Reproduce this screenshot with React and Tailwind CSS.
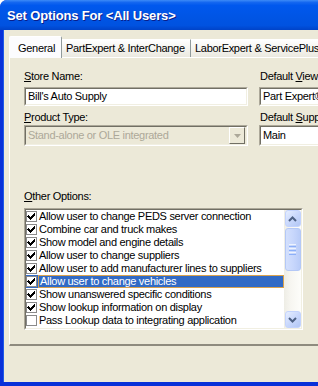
import React from "react";

const items = [
  ["Allow user to change PEDS server connection", true],
  ["Combine car and truck makes", true],
  ["Show model and engine details", true],
  ["Allow user to change suppliers", true],
  ["Allow user to add manufacturer lines to suppliers", true],
  ["Allow user to change vehicles", true],
  ["Show unanswered specific conditions", true],
  ["Show lookup information on display", true],
  ["Pass Lookup data to integrating application", false],
];

function Sunken({ className = "", inner = "", children }) {
  return (
    <div className={"border border-t-[#ACA899] border-l-[#ACA899] border-b-white border-r-white " + className}>
      <div className={"border border-t-[#716F64] border-l-[#716F64] border-b-[#F1EFE2] border-r-[#F1EFE2] h-full " + inner}>
        {children}
      </div>
    </div>
  );
}

function Check({ checked }) {
  return (
    <div className="w-[11px] h-[11px] shrink-0 bg-white border border-[#8A8A8A] flex items-center justify-center">
      {checked && (
        <svg width="9" height="9" viewBox="0 0 9 9" shapeRendering="crispEdges">
          <path d="M1 3h1v1h1v1h1v-1h1v-1h1v-1h1v-1h1v3h-1v1h-1v1h-1v1h-1v1h-1v-1h-1v-1h-1v-1h-1z" fill="#000" />
        </svg>
      )}
    </div>
  );
}

function ScrollBtn({ up }) {
  return (
    <div className="w-[16px] h-[17px] rounded-[3px] border border-[#C3D3FD] bg-[linear-gradient(135deg,#E6EEFF_0%,#C9D8FC_50%,#B2C7F5_100%)] flex items-center justify-center">
      <svg width="9" height="6" viewBox="0 0 9 6">
        <path d={up ? "M1 5L4.5 1.5L8 5" : "M1 1L4.5 4.5L8 1"} fill="none" stroke="#4D6185" strokeWidth="2" />
      </svg>
    </div>
  );
}

export default function App() {
  return (
    <div className="w-[318px] h-[386px] overflow-hidden bg-white font-['Liberation_Sans',Arial,sans-serif] text-[11px] leading-[13px] tracking-[-0.3px] text-black">
      <div className="w-[360px] h-[386px] flex flex-col rounded-tl-[7px] overflow-hidden bg-[#0831D9]">
        {/* Title bar */}
        <div className="h-[30px] shrink-0 flex items-center pl-[7px] pt-[1px] bg-[linear-gradient(180deg,#3D8BF7_0%,#1467F0_8%,#0058EE_18%,#0055E5_55%,#0052E0_85%,#0043C8_100%)]">
          <span className="text-white font-bold text-[13px] leading-[16px] tracking-[-0.15px] [text-shadow:1px_1px_0_#0A1E8A]">
            Set Options For &lt;All Users&gt;
          </span>
        </div>
        {/* Client */}
        <div className="flex-1 ml-[3px] mb-[4px] border-l border-l-[#1F5AE8] bg-[#ECE9D8] flex flex-col pl-[5px] pt-[6px]">
          {/* Tabs */}
          <div className="flex items-end h-[21px] shrink-0 relative z-10">
            <div className="w-[53px] h-[22px] -mb-[1px] bg-[#FCFCFE] border-l border-t border-white border-r border-r-[#919B9C] rounded-t-[2px] pl-[8px] pt-[5px]">
              General
            </div>
            <div className="w-[129px] h-[18px] bg-[linear-gradient(180deg,#FFFFFF_0%,#F3F2EC_60%,#EBE9E0_100%)] border-t border-t-[#FFFFFF] border-r border-r-[#919B9C] pl-[4px] pt-[2px]">
              PartExpert &amp; InterChange
            </div>
            <div className="w-[140px] h-[18px] bg-[linear-gradient(180deg,#FFFFFF_0%,#F3F2EC_60%,#EBE9E0_100%)] border-t border-t-[#FFFFFF] border-r border-r-[#919B9C] pl-[4px] pt-[2px] whitespace-nowrap">
              LaborExpert &amp; ServicePlus
            </div>
          </div>
          {/* Pane */}
          <div className="h-[289px] shrink-0 border-t border-l border-white border-b-2 border-b-[#8E8B7E] flex flex-col pl-[14px] pt-[12px]">
            <div className="grid grid-cols-[224px_120px] gap-x-[11px]">
              <div className="flex flex-col">
                <div className="h-[13px]"><span className="underline">S</span>tore Name:</div>
                <Sunken className="mt-[4px] h-[19px]" inner="bg-white pl-[2px] pt-[1px]">Bill's Auto Supply</Sunken>
                <div className="h-[13px] mt-[5px]"><span className="underline">P</span>roduct Type:</div>
                <Sunken className="mt-[1px] h-[21px]" inner="bg-[#ECE9D8] flex items-center justify-between pl-[2px] pr-[1px]">
                  <span className="text-[#ACA899]">Stand-alone or OLE integrated</span>
                  <div className="w-[16px] h-[17px] border border-t-white border-l-white border-b-[#716F64] border-r-[#716F64] bg-[#ECE9D8] flex items-center justify-center">
                    <svg width="7" height="4" viewBox="0 0 7 4"><path d="M0 0h7L3.5 4z" fill="#ACA899" /></svg>
                  </div>
                </Sunken>
              </div>
              <div className="flex flex-col">
                <div className="h-[13px] pl-[1px] whitespace-nowrap">Default <span className="underline">V</span>iew:</div>
                <Sunken className="mt-[4px] h-[19px]" inner="bg-white pl-[2px] pt-[1px] whitespace-nowrap">Part Expert®</Sunken>
                <div className="h-[13px] mt-[5px] pl-[1px] whitespace-nowrap">Default <span className="underline">S</span>upplier:</div>
                <Sunken className="mt-[1px] h-[21px]" inner="bg-white pl-[2px] flex items-center">Main</Sunken>
              </div>
            </div>
            <div className="h-[13px] mt-[44px]"><span className="underline">O</span>ther Options:</div>
            <Sunken className="mt-[5px] w-[279px] h-[122px]" inner="bg-white flex">
              <div className="flex-1 flex flex-col">
                {items.map(([label, checked], i) => {
                  const sel = i === 5;
                  return (
                    <div key={i} className={"h-[13px] flex items-center whitespace-nowrap " + (sel ? "bg-[#316AC5]" : "")}>
                      <Check checked={checked} />
                      <div className={"ml-[1px] pl-[1px] flex-1 h-[13px] " + (sel ? "text-white border border-[#D9A24E] leading-[11px]" : "")}>{label}</div>
                    </div>
                  );
                })}
              </div>
              <div className="w-[17px] shrink-0 flex flex-col items-center bg-[linear-gradient(90deg,#EEEDE5_0%,#F7F6F1_40%,#FDFDFA_100%)]">
                <ScrollBtn up />
                <div className="mt-[1px] w-[16px] h-[43px] rounded-[3px] border border-[#B4C8F6] bg-[linear-gradient(90deg,#D3E0FD_0%,#C8D7FC_50%,#B9CCF8_100%)] flex flex-col items-center justify-center gap-[1px]">
                  <div className="w-[7px] h-[1px] bg-[#EEF4FE]" />
                  <div className="w-[7px] h-[1px] bg-[#8CB0F8]" />
                  <div className="w-[7px] h-[1px] bg-[#EEF4FE]" />
                  <div className="w-[7px] h-[1px] bg-[#8CB0F8]" />
                  <div className="w-[7px] h-[1px] bg-[#EEF4FE]" />
                  <div className="w-[7px] h-[1px] bg-[#8CB0F8]" />
                </div>
                <div className="flex-1" />
                <ScrollBtn />
              </div>
            </Sunken>
          </div>
          <div className="flex-1" />
        </div>
      </div>
    </div>
  );
}
